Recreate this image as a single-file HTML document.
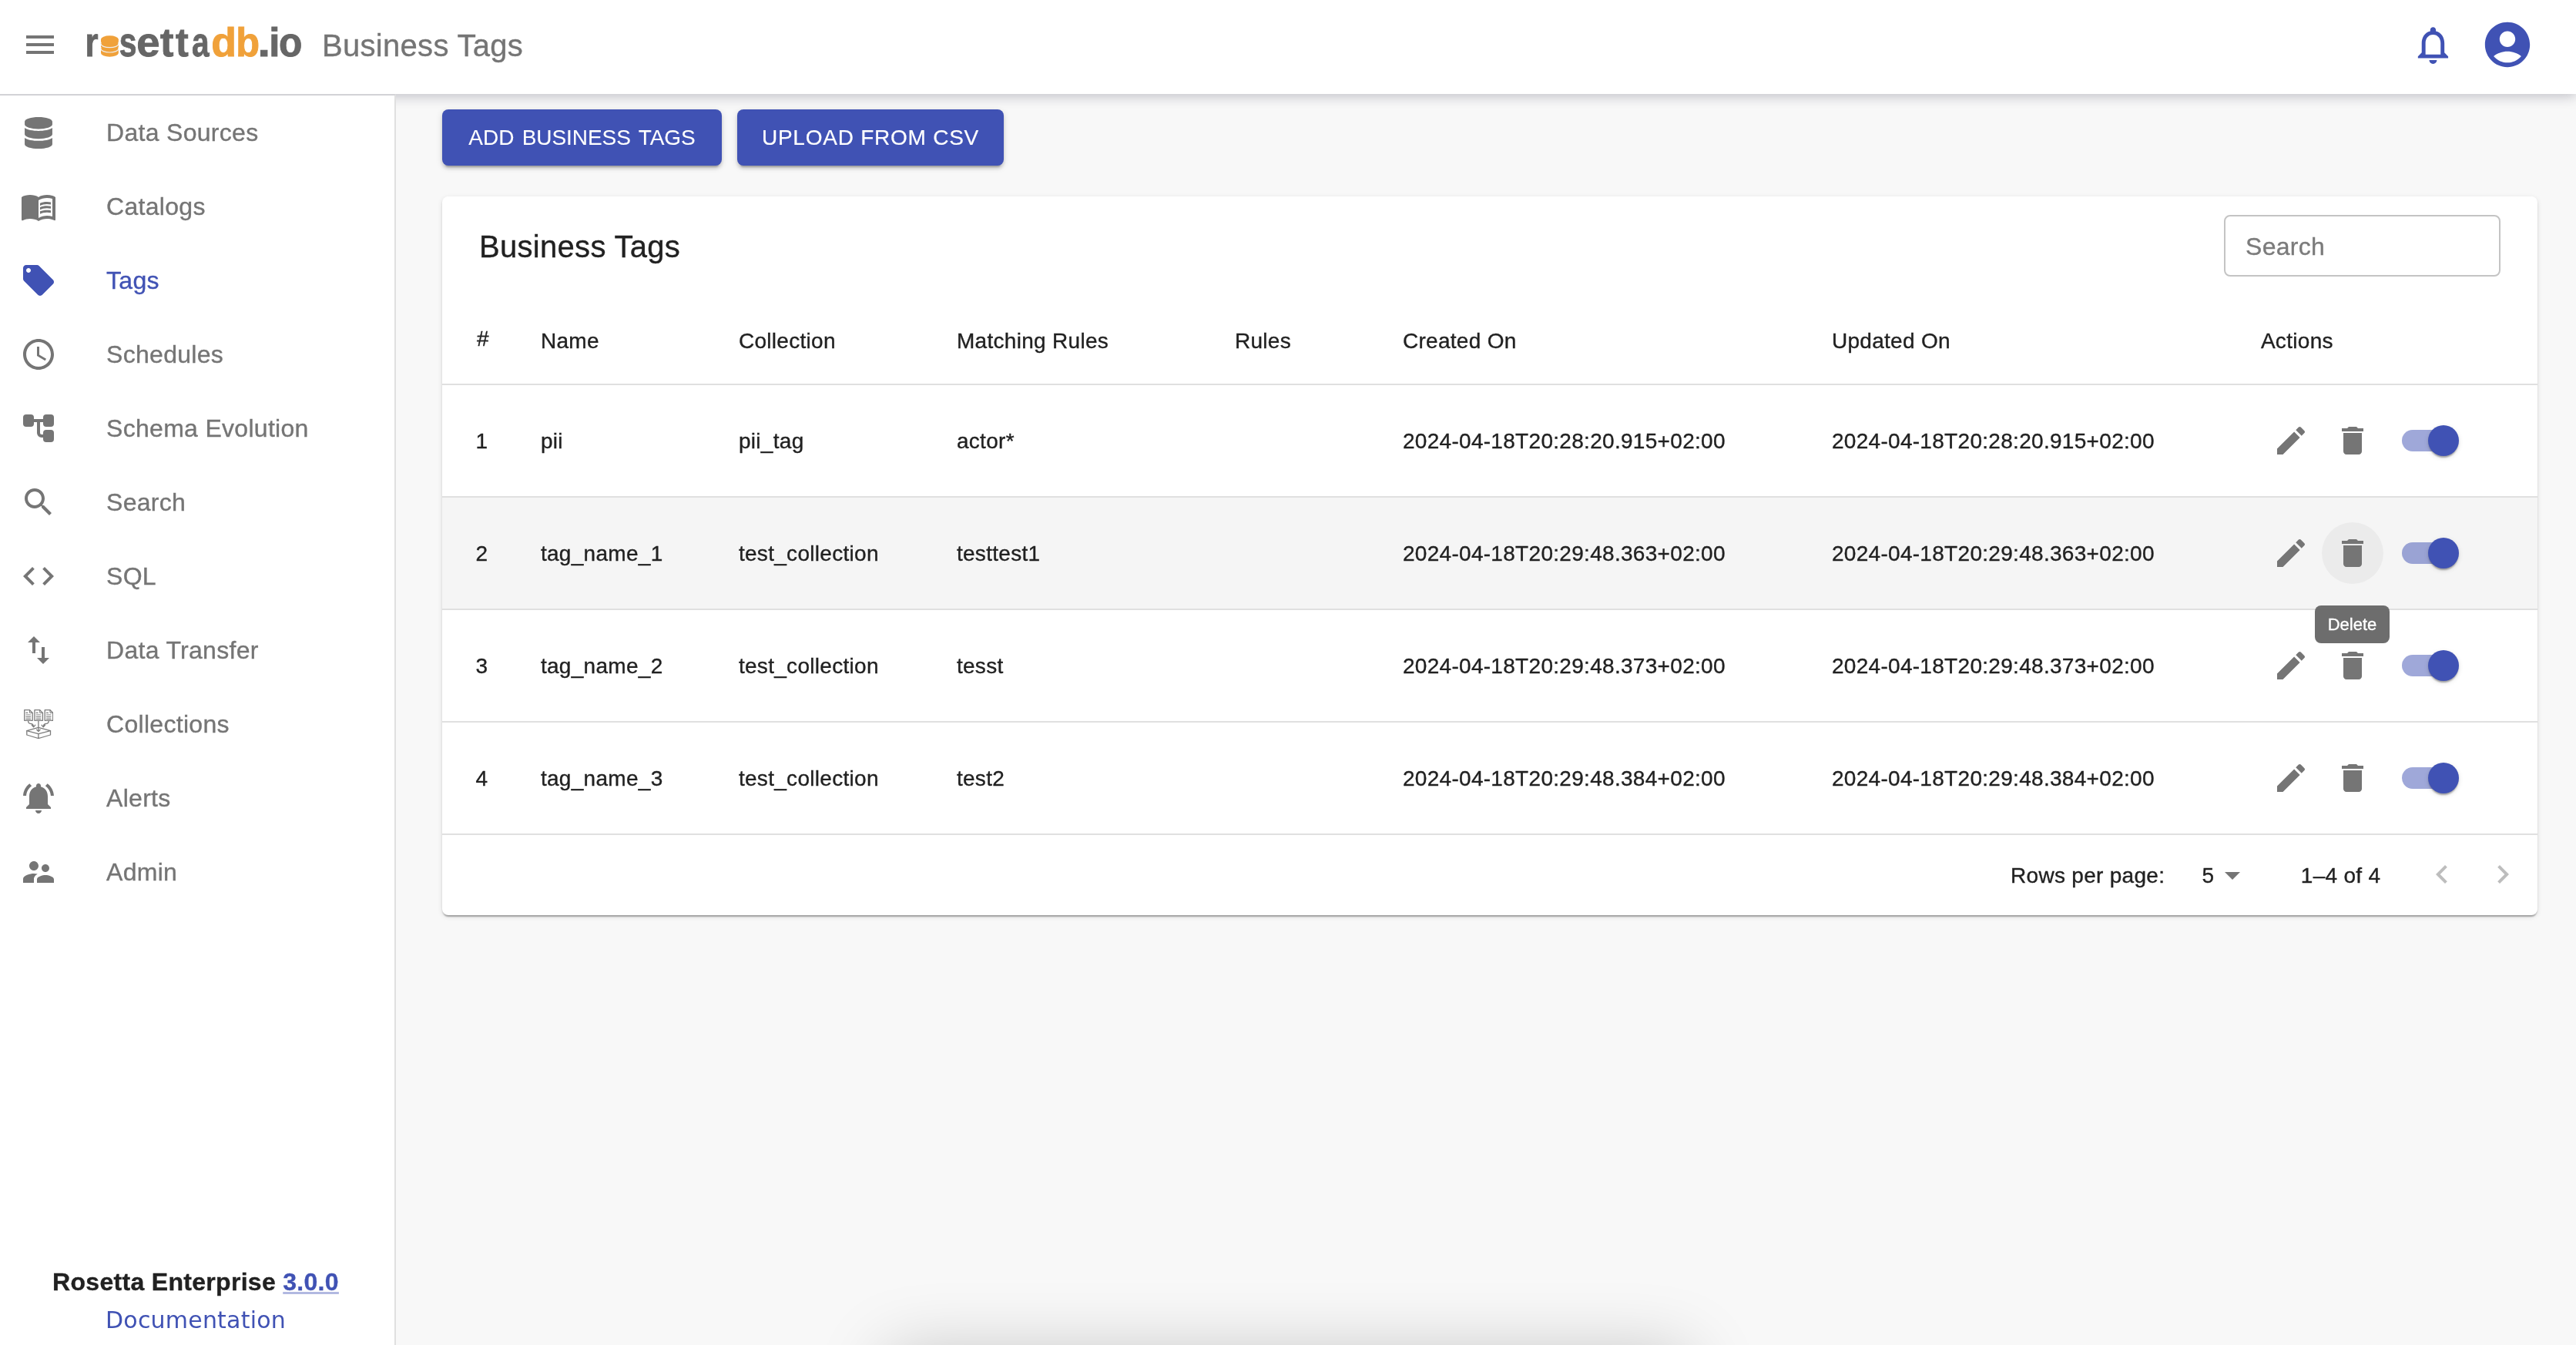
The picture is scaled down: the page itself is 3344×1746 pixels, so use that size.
<!DOCTYPE html>
<html lang="en">
<head>
<meta charset="utf-8">
<title>Business Tags</title>
<style>
*{box-sizing:border-box;}
html,body{margin:0;padding:0;}
body{width:3344px;height:1746px;overflow:hidden;position:relative;background:#f8f8f8;font-family:"Liberation Sans",Arial,sans-serif;color:#212121;-webkit-text-stroke:.35px;}
#wrap{position:absolute;left:0;top:0;width:3344px;height:1746px;overflow:hidden;will-change:transform;}
.ic{display:block;}
#hdr{position:absolute;left:0;top:0;width:3344px;height:122px;background:#fff;z-index:5;box-shadow:0 2px 16px rgba(20,20,50,.28);}
#menu{position:absolute;left:28px;top:34px;}
#logo{position:absolute;left:100px;top:20px;}
#ttl{position:absolute;left:418px;top:36px;font-size:40px;line-height:46px;color:#757575;letter-spacing:.3px;white-space:nowrap;}
#bell{position:absolute;left:3129px;top:28.800px;}
#acct{position:absolute;left:3220px;top:23px;}
#side{position:absolute;left:0;top:122px;width:514px;height:1624px;background:#fff;border-right:2px solid #e0e0e0;border-top:2px solid #d2d2d6;z-index:6;}
.item{position:relative;height:96px;}
.icw{position:absolute;left:26px;top:24px;width:48px;height:48px;display:flex;align-items:center;justify-content:center;}
.lbl{position:absolute;left:138px;top:28px;font-size:32px;line-height:40px;color:#757575;letter-spacing:.3px;white-space:nowrap;}
.item.active .lbl{color:#4052b4;}
#ver{position:absolute;left:-2px;top:1641px;width:512px;letter-spacing:.3px;text-align:center;font-size:32px;line-height:46px;font-weight:bold;color:#212121;white-space:nowrap;}
#ver a{color:#4052b4;text-decoration:underline;text-decoration-color:rgba(63,81,181,.4);text-decoration-thickness:3px;text-underline-offset:2px;}
#doc{position:absolute;left:-2px;top:1688px;width:512px;text-align:center;font-family:"DejaVu Sans","Liberation Sans",sans-serif;font-size:30px;line-height:48px;color:#4052b4;letter-spacing:.2px;-webkit-text-stroke:0;white-space:nowrap;}
.btn{position:absolute;top:142px;height:73px;border-radius:8px;background:#4052b4;color:#fff;font-size:28px;line-height:73px;text-align:center;letter-spacing:.8px;white-space:nowrap;box-shadow:0 6px 2px -4px rgba(0,0,0,.2),0 4px 4px 0 rgba(0,0,0,.14),0 2px 10px 0 rgba(0,0,0,.12);}
#b1{left:574px;width:363px;letter-spacing:-.05px;word-spacing:2.600px;-webkit-text-stroke:.1px;}
#b2{left:957px;width:346px;letter-spacing:.76px;-webkit-text-stroke:.2px;}
#card{position:absolute;left:574px;top:255px;width:2720px;height:933px;background:#fff;border-radius:8px;box-shadow:0 4px 2px -2px rgba(0,0,0,.2),0 2px 2px 0 rgba(0,0,0,.14),0 2px 6px 0 rgba(0,0,0,.12);}
#ctitle{position:absolute;left:48px;top:42px;font-size:40px;line-height:46px;letter-spacing:.3px;color:#212121;white-space:nowrap;}
#srch{position:absolute;left:2313px;top:24px;width:359px;height:80px;border:2px solid #c4c4c4;border-radius:8px;}
#srch span{position:absolute;left:26px;top:19px;font-size:32px;line-height:40px;color:#7b7b7b;letter-spacing:.3px;}
#thead{position:absolute;left:0;top:129px;width:2720px;height:116px;border-bottom:2px solid #e0e0e0;}
#thead .c{top:42.500px;}
.row{position:absolute;left:0;width:2720px;height:146px;border-bottom:2px solid #e0e0e0;}
.row.hover{background:#f5f5f5;}
.c{position:absolute;top:56.700px;font-size:28px;line-height:32px;letter-spacing:.3px;white-space:nowrap;color:#212121;}
.c0{left:43.400px;}.c1{left:127.900px;}.c2{left:384.900px;}.c3{left:667.900px;}.c4{left:1028.900px;}.c5{left:1246.900px;}.c6{left:1803.900px;}.c7{left:2360.900px;}
#thead .c0{left:45px;top:39.500px;}
.ib{position:absolute;top:32px;width:80px;height:80px;border-radius:50%;display:flex;align-items:center;justify-content:center;}
.ib.edit{left:2360px;}.ib.del{left:2440px;}
.ib.hov{background:rgba(0,0,0,.04);}
.sw{position:absolute;left:2520px;top:34px;width:116px;height:76px;}
.track{position:absolute;left:24px;top:24px;width:68px;height:28px;border-radius:14px;background:#4052b4;opacity:.5;}
.thumb{position:absolute;left:58px;top:18px;width:40px;height:40px;border-radius:50%;background:#4052b4;box-shadow:0 4px 2px -2px rgba(0,0,0,.2),0 2px 2px 0 rgba(0,0,0,.14),0 2px 6px 0 rgba(0,0,0,.12);}
#tip{position:absolute;left:3005px;top:786px;width:97px;height:49px;border-radius:8px;background:rgba(97,97,97,.92);color:#fff;font-size:22px;line-height:49px;text-align:center;z-index:9;white-space:nowrap;}
#foot{position:absolute;left:0;top:829px;width:2720px;height:104px;}
#foot .t{position:absolute;top:37px;font-size:28px;line-height:32px;letter-spacing:.3px;white-space:nowrap;color:#212121;}
#snack{position:absolute;left:1152px;top:1756px;width:1040px;height:200px;border-radius:8px;background:#fff;box-shadow:0 0 90px 0 rgba(0,0,0,.21);}
</style>
</head>
<body>
<div id="wrap">
<div id="hdr">
<div id="menu"><svg class="ic" width="48" height="48" viewBox="0 0 24 24" fill="#757575" style=""><path d="M3 18h18v-2H3v2zm0-5h18v-2H3v2zm0-7v2h18V6H3z"/></svg></div>
<svg id="logo" width="320" height="80" viewBox="0 0 320 80">
<text y="52.800" font-family="Liberation Sans, Arial, sans-serif" font-weight="bold" font-size="51" fill="#666" stroke="#666" stroke-width=".9"><tspan x="10.42" textLength="17.04" lengthAdjust="spacingAndGlyphs">r</tspan><tspan x="33" font-size="34" fill="#f0a13a" stroke="none">o</tspan><tspan x="54.7" textLength="22.79" lengthAdjust="spacingAndGlyphs">s</tspan><tspan x="77.36" textLength="30.28" lengthAdjust="spacingAndGlyphs">e</tspan><tspan x="108.1" textLength="17.38" lengthAdjust="spacingAndGlyphs">t</tspan><tspan x="128.0" textLength="16.68" lengthAdjust="spacingAndGlyphs">t</tspan><tspan x="148.9" textLength="22.58" lengthAdjust="spacingAndGlyphs">a</tspan><tspan x="174.3" textLength="32.72" lengthAdjust="spacingAndGlyphs" fill="#f0a13a" stroke="#f0a13a">d</tspan><tspan x="206.33" textLength="30.81" lengthAdjust="spacingAndGlyphs" fill="#f0a13a" stroke="#f0a13a">b</tspan><tspan x="234.41" textLength="16.48" lengthAdjust="spacingAndGlyphs">.</tspan><tspan x="249.2" textLength="14.18" lengthAdjust="spacingAndGlyphs">i</tspan><tspan x="262.05" textLength="30.38" lengthAdjust="spacingAndGlyphs">o</tspan></text>
<g>
<rect x="31" y="31" width="22.800" height="18" fill="#f0a13a"/>
<ellipse cx="42.400" cy="49" rx="11.400" ry="4.700" fill="#f0a13a"/>
<ellipse cx="42.400" cy="43.300" rx="11.400" ry="4.700" fill="#f0a13a" stroke="#eee" stroke-width="1.200"/>
<rect x="31.600" y="37" width="21.600" height="6.300" fill="#f0a13a"/>
<ellipse cx="42.400" cy="37" rx="11.400" ry="4.700" fill="#f0a13a" stroke="#eee" stroke-width="1.200"/>
<rect x="31.600" y="31" width="21.600" height="6" fill="#f0a13a"/>
<ellipse cx="42.400" cy="31" rx="11.400" ry="4.700" fill="#f0a13a"/>
</g>
</svg>
<div id="ttl">Business Tags</div>
<div id="bell"><svg class="ic" width="58.9" height="58.9" viewBox="0 0 24 24" fill="#4052b4" style=""><path d="M12 22c1.100 0 2-.900 2-2h-4c0 1.100.900 2 2 2zm6-6v-5c0-3.070-1.630-5.640-4.500-6.320V4c0-.830-.670-1.500-1.500-1.500s-1.500.670-1.500 1.500v.680C7.640 5.360 6 7.920 6 11v5l-2 2v1h16v-1l-2-2zm-2 1H8v-6c0-2.480 1.510-4.500 4-4.500s4 2.020 4 4.500v6z"/></svg></div>
<div id="acct"><svg class="ic" width="70" height="70" viewBox="0 0 24 24" fill="#4052b4" style=""><path d="M12 2C6.48 2 2 6.48 2 12s4.48 10 10 10 10-4.48 10-10S17.52 2 12 2zm0 4c1.93 0 3.5 1.57 3.5 3.5S13.93 13 12 13s-3.5-1.57-3.5-3.5S10.07 6 12 6zm0 14c-2.03 0-4.43-.82-6.14-2.88C7.55 15.8 9.68 15 12 15s4.45.8 6.14 2.12C16.43 19.18 14.03 20 12 20z"/></svg></div>
</div>
<div id="side">
<div class="item"><span class="icw"><svg class="ic" width="36" height="41" viewBox="0 0 448 512" fill="#757575"><path d="M448 73.143v45.714C448 159.143 347.667 192 224 192S0 159.143 0 118.857V73.143C0 32.857 100.333 0 224 0s224 32.857 224 73.143zM448 176v102.857C448 319.143 347.667 352 224 352S0 319.143 0 278.857V176c48.125 33.143 136.208 48.572 224 48.572S399.874 209.143 448 176zm0 160v102.857C448 479.143 347.667 512 224 512S0 479.143 0 438.857V336c48.125 33.143 136.208 48.572 224 48.572S399.874 369.143 448 336z"/></svg></span><span class="lbl">Data Sources</span></div>
<div class="item"><span class="icw"><svg class="ic" width="48" height="48" viewBox="0 0 24 24" fill="#757575" style=""><path d="M21 5c-1.11-.35-2.33-.5-3.5-.5-1.95 0-4.05.4-5.5 1.5-1.45-1.1-3.55-1.5-5.5-1.5S2.45 4.9 1 6v14.65c0 .25.25.5.5.5.1 0 .15-.05.25-.05C3.1 20.45 5.05 20 6.500 20c1.950 0 4.050.400 5.500 1.500 1.350-.850 3.800-1.500 5.500-1.500 1.650 0 3.350.300 4.750 1.050.100.050.150.050.250.050.250 0 .500-.250.500-.500V6c-.600-.450-1.250-.750-2-1zm0 13.500c-1.100-.350-2.300-.500-3.500-.500-1.700 0-4.150.650-5.500 1.500V8c1.350-.850 3.800-1.500 5.500-1.500 1.200 0 2.400.150 3.500.500v11.500z"/><path d="M17.500 10.500c.880 0 1.730.090 2.500.260V9.240c-.790-.150-1.640-.240-2.500-.240-1.700 0-3.240.290-4.500.830v1.660c1.130-.640 2.700-.990 4.500-.990zM13 12.490v1.660c1.130-.640 2.700-.990 4.500-.990.880 0 1.730.090 2.500.260V11.900c-.790-.150-1.640-.240-2.500-.240-1.700 0-3.240.300-4.500.830zM17.500 14.330c-1.700 0-3.240.290-4.500.830v1.660c1.130-.640 2.700-.990 4.500-.990.880 0 1.730.090 2.500.260v-1.520c-.790-.160-1.640-.240-2.500-.240z"/></svg></span><span class="lbl">Catalogs</span></div>
<div class="item active"><span class="icw"><svg class="ic" width="48" height="48" viewBox="0 0 24 24" fill="#4052b4" style=""><path d="M21.410 11.580l-9-9C12.050 2.220 11.550 2 11 2H4c-1.100 0-2 .900-2 2v7c0 .550.220 1.050.590 1.420l9 9c.360.360.860.580 1.410.580.550 0 1.050-.220 1.410-.590l7-7c.370-.360.590-.860.590-1.410 0-.550-.230-1.060-.590-1.420zM5.500 7C4.670 7 4 6.330 4 5.500S4.670 4 5.500 4 7 4.670 7 5.500 6.330 7 5.500 7z"/></svg></span><span class="lbl">Tags</span></div>
<div class="item"><span class="icw"><svg class="ic" width="48" height="48" viewBox="0 0 24 24" fill="#757575" style=""><path d="M11.990 2C6.470 2 2 6.480 2 12s4.470 10 9.990 10C17.520 22 22 17.520 22 12S17.520 2 11.990 2zM12 20c-4.420 0-8-3.580-8-8s3.580-8 8-8 8 3.580 8 8-3.580 8-8 8zm.500-13H11v6l5.250 3.150.750-1.230-4.500-2.670z"/></svg></span><span class="lbl">Schedules</span></div>
<div class="item"><span class="icw"><svg class="ic" width="48" height="48" viewBox="0 0 24 24" fill="#757575" style=""><rect x="2" y="3" width="7" height="8" rx="2"/><rect x="15" y="3" width="7" height="8" rx="2"/><rect x="15" y="13" width="7" height="8" rx="2"/><path d="M8.5 6h7v2H13v7a1 1 0 0 0 1 1h1.500v2H14a3 3 0 0 1-3-3V8H8.500z"/></svg></span><span class="lbl">Schema Evolution</span></div>
<div class="item"><span class="icw"><svg class="ic" width="48" height="48" viewBox="0 0 24 24" fill="#757575" style=""><path d="M15.500 14h-.790l-.280-.270C15.410 12.590 16 11.110 16 9.500 16 5.910 13.090 3 9.500 3S3 5.910 3 9.500 5.910 16 9.500 16c1.610 0 3.090-.590 4.230-1.570l.270.280v.790l5 4.990L20.490 19l-4.990-5zm-6 0C7.010 14 5 11.990 5 9.500S7.010 5 9.500 5 14 7.010 14 9.500 11.990 14 9.500 14z"/></svg></span><span class="lbl">Search</span></div>
<div class="item"><span class="icw"><svg class="ic" width="48" height="48" viewBox="0 0 24 24" fill="#757575" style=""><path d="M9.400 16.600L4.800 12l4.600-4.600L8 6l-6 6 6 6 1.400-1.400zm5.200 0l4.600-4.600-4.600-4.600L16 6l6 6-6 6-1.400-1.400z"/></svg></span><span class="lbl">SQL</span></div>
<div class="item"><span class="icw"><svg class="ic" width="48" height="48" viewBox="0 0 24 24" fill="#757575" style=""><path d="M9 3L5 6.990h3V14h2V6.990h3L9 3zm7 14.010V10h-2v7.010h-3L15 21l4-3.990h-3z"/></svg></span><span class="lbl">Data Transfer</span></div>
<div class="item"><span class="icw"><svg class="ic" width="38" height="38" viewBox="0 0 38 38" fill="none" stroke="#7d7d7d" stroke-width="1.300" stroke-linejoin="round" stroke-linecap="round">
<path d="M0.70 .7h6.8l3.700 3.700v9.900h-10.500z"/><path d="M7.50 .7v3.700h3.700" stroke-width="1"/><path d="M2.90 4.400h2M2.90 7h5.700M2.90 9.600h5.700M2.90 12.300h5.700" stroke-width="1.200"/>
<path d="M13.90 .7h6.8l3.700 3.700v9.900h-10.500z"/><path d="M20.70 .7v3.700h3.700" stroke-width="1"/><path d="M16.10 4.400h2M16.10 7h5.700M16.10 9.600h5.700M16.10 12.300h5.700" stroke-width="1.200"/>
<path d="M27.20 .7h6.8l3.700 3.700v9.900h-10.500z"/><path d="M34.00 .7v3.700h3.700" stroke-width="1"/><path d="M29.40 4.400h2M29.40 7h5.700M29.40 9.600h5.700M29.40 12.300h5.700" stroke-width="1.200"/>
<path d="M5.600 15.200c0 2.600 1.500 3.100 3.500 3.300s3.300 1.200 3.400 3.900M10.300 20.400l2.300 2.400 2.200-2.600"/>
<path d="M32.200 15.200c0 2.600-1.500 3.100-3.500 3.300s-3.300 1.200-3.400 3.900M27.500 20.400l-2.300 2.400-2.200-2.600"/>
<path d="M18.900 15.200v13.100M16.600 26.100l2.300 2.400 2.300-2.400"/>
<path d="M18.900 23.400L34.500 27.600 18.900 31.700 3.800 27.600z"/>
<path d="M3.800 27.600v5.400l15.100 4.500 15.600-4.500v-5.400M18.900 31.700v5.800"/>
</svg></span><span class="lbl">Collections</span></div>
<div class="item"><span class="icw"><svg class="ic" width="48" height="48" viewBox="0 0 24 24" fill="#757575" style=""><path d="M12 22c1.100 0 2-.900 2-2h-4c0 1.100.890 2 2 2zm6-6v-5c0-3.070-1.640-5.640-4.500-6.320V4c0-.830-.670-1.500-1.500-1.500s-1.500.670-1.500 1.500v.680C7.630 5.360 6 7.920 6 11v5l-2 2v1h16v-1l-2-2zM7.580 4.080 6.150 2.650C3.750 4.480 2.170 7.300 2.030 10.500h2c.150-2.650 1.510-4.970 3.550-6.420zm12.390 6.420h2c-.150-3.200-1.730-6.020-4.120-7.850l-1.420 1.430c2.020 1.450 3.390 3.770 3.540 6.420z"/></svg></span><span class="lbl">Alerts</span></div>
<div class="item"><span class="icw"><svg class="ic" width="48" height="48" viewBox="0 0 24 24" fill="#757575" style=""><path d="M16.500 12c1.380 0 2.490-1.120 2.490-2.500S17.880 7 16.500 7C15.120 7 14 8.120 14 9.500s1.120 2.500 2.500 2.500zM9 11c1.660 0 2.990-1.340 2.990-3S10.660 5 9 5C7.340 5 6 6.340 6 8s1.340 3 3 3zm7.500 3c-1.830 0-5.500.920-5.500 2.750V19h11v-2.250c0-1.830-3.670-2.750-5.500-2.750zM9 13c-2.330 0-7 1.170-7 3.500V19h7v-2.250c0-.850.330-2.340 2.370-3.470C10.500 13.100 9.660 13 9 13z"/></svg></span><span class="lbl">Admin</span></div>

<div id="ver" style="top:1517px">Rosetta Enterprise <a>3.0.0</a></div>
<div id="doc" style="top:1565.500px">Documentation</div>
</div>
<div class="btn" id="b1">ADD BUSINESS TAGS</div>
<div class="btn" id="b2">UPLOAD FROM CSV</div>
<div id="card">
<div id="ctitle">Business Tags</div>
<div id="srch"><span>Search</span></div>
<div id="thead"><span class="c c0">#</span><span class="c c1">Name</span><span class="c c2">Collection</span><span class="c c3">Matching Rules</span><span class="c c4">Rules</span><span class="c c5">Created On</span><span class="c c6">Updated On</span><span class="c c7">Actions</span></div>
<div id="rows" style="position:absolute;left:0;top:245px;">
<div class="row" style="top:0px">
<span class="c c0">1</span><span class="c c1">pii</span><span class="c c2">pii_tag</span><span class="c c3">actor*</span><span class="c c5">2024-04-18T20:28:20.915+02:00</span><span class="c c6">2024-04-18T20:28:20.915+02:00</span>
<span class="ib edit"><svg class="ic" width="48" height="48" viewBox="0 0 24 24" fill="#757575" style=""><path d="M3 17.250V21h3.750L17.810 9.940l-3.750-3.750L3 17.250zM20.710 7.040c.390-.390.390-1.020 0-1.410l-2.340-2.340c-.390-.390-1.020-.390-1.410 0l-1.830 1.830 3.750 3.750 1.830-1.830z"/></svg></span><span class="ib del"><svg class="ic" width="48" height="48" viewBox="0 0 24 24" fill="#757575" style=""><path d="M6 19c0 1.100.900 2 2 2h8c1.100 0 2-.900 2-2V7H6v12zM19 4h-3.500l-1-1h-5l-1 1H5v2h14V4z"/></svg></span>
<span class="sw"><span class="track"></span><span class="thumb"></span></span>
</div>
<div class="row hover" style="top:146px">
<span class="c c0">2</span><span class="c c1">tag_name_1</span><span class="c c2">test_collection</span><span class="c c3">testtest1</span><span class="c c5">2024-04-18T20:29:48.363+02:00</span><span class="c c6">2024-04-18T20:29:48.363+02:00</span>
<span class="ib edit"><svg class="ic" width="48" height="48" viewBox="0 0 24 24" fill="#757575" style=""><path d="M3 17.250V21h3.750L17.810 9.940l-3.750-3.750L3 17.250zM20.710 7.040c.390-.390.390-1.020 0-1.410l-2.340-2.340c-.390-.390-1.020-.390-1.410 0l-1.830 1.830 3.750 3.750 1.830-1.830z"/></svg></span><span class="ib del hov"><svg class="ic" width="48" height="48" viewBox="0 0 24 24" fill="#757575" style=""><path d="M6 19c0 1.100.900 2 2 2h8c1.100 0 2-.900 2-2V7H6v12zM19 4h-3.500l-1-1h-5l-1 1H5v2h14V4z"/></svg></span>
<span class="sw"><span class="track"></span><span class="thumb"></span></span>
</div>
<div class="row" style="top:292px">
<span class="c c0">3</span><span class="c c1">tag_name_2</span><span class="c c2">test_collection</span><span class="c c3">tesst</span><span class="c c5">2024-04-18T20:29:48.373+02:00</span><span class="c c6">2024-04-18T20:29:48.373+02:00</span>
<span class="ib edit"><svg class="ic" width="48" height="48" viewBox="0 0 24 24" fill="#757575" style=""><path d="M3 17.250V21h3.750L17.810 9.940l-3.750-3.750L3 17.250zM20.710 7.040c.390-.390.390-1.020 0-1.410l-2.340-2.340c-.390-.390-1.020-.390-1.410 0l-1.830 1.830 3.750 3.750 1.830-1.830z"/></svg></span><span class="ib del"><svg class="ic" width="48" height="48" viewBox="0 0 24 24" fill="#757575" style=""><path d="M6 19c0 1.100.900 2 2 2h8c1.100 0 2-.900 2-2V7H6v12zM19 4h-3.500l-1-1h-5l-1 1H5v2h14V4z"/></svg></span>
<span class="sw"><span class="track"></span><span class="thumb"></span></span>
</div>
<div class="row" style="top:438px">
<span class="c c0">4</span><span class="c c1">tag_name_3</span><span class="c c2">test_collection</span><span class="c c3">test2</span><span class="c c5">2024-04-18T20:29:48.384+02:00</span><span class="c c6">2024-04-18T20:29:48.384+02:00</span>
<span class="ib edit"><svg class="ic" width="48" height="48" viewBox="0 0 24 24" fill="#757575" style=""><path d="M3 17.250V21h3.750L17.810 9.940l-3.750-3.750L3 17.250zM20.710 7.040c.390-.390.390-1.020 0-1.410l-2.340-2.340c-.390-.390-1.020-.390-1.410 0l-1.830 1.830 3.750 3.750 1.830-1.830z"/></svg></span><span class="ib del"><svg class="ic" width="48" height="48" viewBox="0 0 24 24" fill="#757575" style=""><path d="M6 19c0 1.100.900 2 2 2h8c1.100 0 2-.900 2-2V7H6v12zM19 4h-3.500l-1-1h-5l-1 1H5v2h14V4z"/></svg></span>
<span class="sw"><span class="track"></span><span class="thumb"></span></span>
</div>

</div>
<div id="foot">
<span class="t" style="left:2036px">Rows per page:</span>
<span class="t" style="left:2284.600px">5</span>
<span style="position:absolute;left:2300px;top:28px"><svg class="ic" width="48" height="48" viewBox="0 0 24 24" fill="#757575" style=""><path d="M7 10l5 5 5-5z"/></svg></span>
<span class="t" style="left:2412.800px">1–4 of 4</span>
<span style="position:absolute;left:2572px;top:27px"><svg class="ic" width="48" height="48" viewBox="0 0 24 24" fill="#bdbdbd" style=""><path d="M15.410 16.590L10.830 12l4.580-4.590L14 6l-6 6 6 6 1.410-1.410z"/></svg></span>
<span style="position:absolute;left:2651px;top:27px"><svg class="ic" width="48" height="48" viewBox="0 0 24 24" fill="#bdbdbd" style=""><path d="M8.590 16.590L13.170 12 8.590 7.410 10 6l6 6-6 6-1.410-1.410z"/></svg></span>
</div>
</div>
<div id="tip">Delete</div>
<div id="snack"></div>
</div>
</body>
</html>
